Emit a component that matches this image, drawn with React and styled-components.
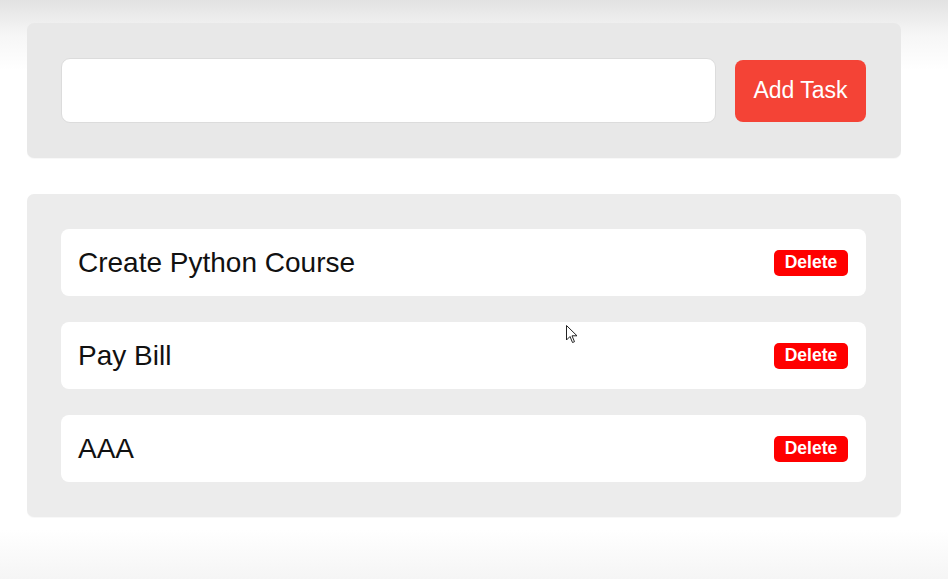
import React from 'react';
import styled, { createGlobalStyle } from 'styled-components';

const GlobalStyle = createGlobalStyle`
    html, body {
        margin: 0;
        padding: 0;
    }
    body {
        font-family: "Liberation Sans", Arial, sans-serif;
        min-height: 579px;
        background: linear-gradient(
            to bottom,
            #e2e2e2 0px,
            #f6f6f6 35px,
            #ffffff 70px,
            #ffffff 530px,
            #f5f5f5 579px
        );
    }
`;

const Page = styled.div`
    position: relative;
    width: 874px;
    padding: 23px 0 0 27px;
    display: flex;
    flex-direction: column;
    gap: 36px;
`;

const Panel = styled.div`
    background: ${ props => props.tone || '#ececec' };
    border-radius: 7px;
    padding: 35px 35px 35px 34px;
    box-shadow: 0 1px 1px rgba(0, 0, 0, 0.03);
`;

const AddRow = styled.div`
    display: flex;
    align-items: center;
    gap: 19px;
`;

const TaskInput = styled.input`
    flex: 1;
    height: 65px;
    box-sizing: border-box;
    border: 1px solid #dcdcdc;
    border-radius: 9px;
    background: #ffffff;
    font-family: inherit;
    font-size: 22px;
    padding: 0 16px;
    outline: none;
`;

const AddButton = styled.button`
    width: 131px;
    height: 62px;
    border: none;
    border-radius: 8px;
    background: #f44336;
    color: #ffffff;
    font-family: inherit;
    font-size: 23px;
    padding: 0;
    cursor: pointer;
`;

const TaskList = styled.ul`
    list-style: none;
    margin: 0;
    padding: 0;
    display: flex;
    flex-direction: column;
    gap: 26px;
`;

const TaskItem = styled.li`
    height: 67px;
    background: #ffffff;
    border-radius: 8px;
    display: flex;
    align-items: center;
    justify-content: space-between;
    padding: 0 18px 0 17px;
`;

const TaskText = styled.span`
    font-size: 28px;
    color: #111111;
`;

const DeleteButton = styled.button`
    width: 74px;
    height: 26px;
    border: none;
    border-radius: 5px;
    background: #ff0000;
    color: #ffffff;
    font-family: inherit;
    font-weight: bold;
    font-size: 17.5px;
    padding: 0;
    cursor: pointer;
`;

const Cursor = styled.svg`
    position: absolute;
    left: 566px;
    top: 325px;
    pointer-events: none;
`;

const tasks = [ 'Create Python Course', 'Pay Bill', 'AAA' ];

const App = () => (
    <>
        <GlobalStyle />
        <Page>
            <Panel tone="#e8e8e8">
                <AddRow>
                    <TaskInput type="text" />
                    <AddButton>Add Task</AddButton>
                </AddRow>
            </Panel>
            <Panel>
                <TaskList>
                    {tasks.map(task => (
                        <TaskItem key={task}>
                            <TaskText>{task}</TaskText>
                            <DeleteButton>Delete</DeleteButton>
                        </TaskItem>
                    ))}
                </TaskList>
            </Panel>
            <Cursor width="13" height="20" viewBox="0 0 13 20">
                <path d="M0.5 0.5 L0.5 15 L4 11.5 L6.5 17.5 L8.5 16.7 L6 10.8 L11 10.8 Z" fill="#ffffff" stroke="#222222" strokeWidth="1" strokeLinejoin="round" />
            </Cursor>
        </Page>
    </>
);

export default App;
